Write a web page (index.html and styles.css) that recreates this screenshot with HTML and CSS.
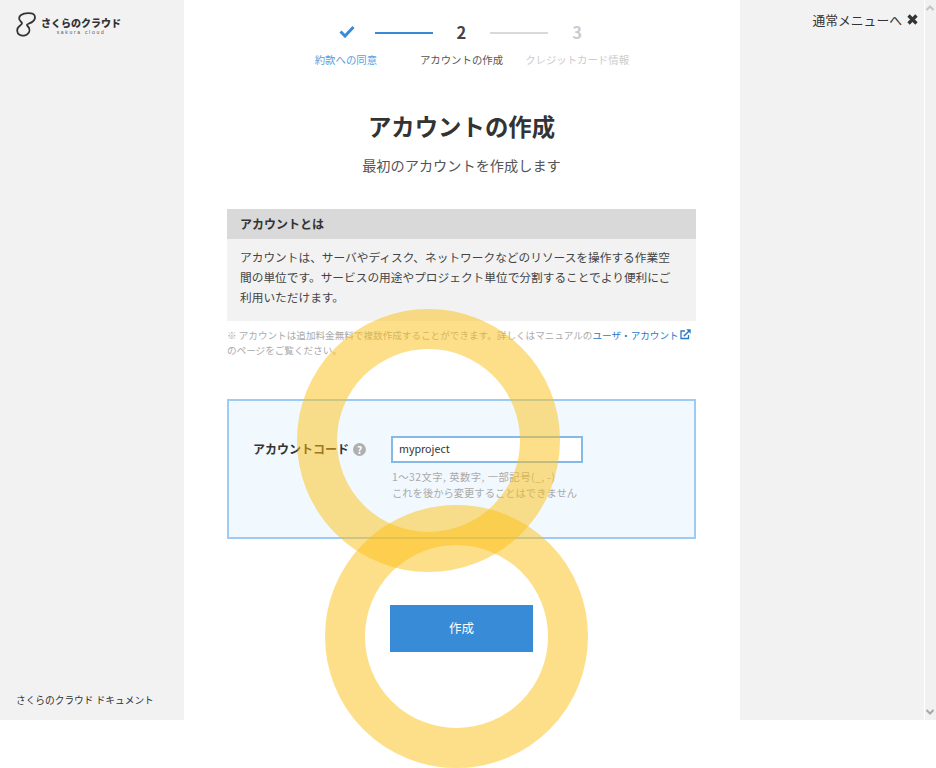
FILE: index.html
```html
<!DOCTYPE html>
<html lang="ja">
<head>
<meta charset="utf-8">
<title>アカウントの作成</title>
<link rel="stylesheet" href="styles.css">
</head>
<body>
<div class="app">
  <aside class="side-left">
    <div class="logo">
      <svg class="logo-mark" width="20" height="25" viewBox="0 0 20 25"><path d="M5 3C7 1.500 12 0.800 15.500 1.300 18.300 1.700 19.300 4 18.800 6.500 18.300 9.500 15.500 10.500 13 11.500 10.500 12.500 10.500 13 12 14.500 13.500 16 14 19 12.500 21 10.500 23.800 6 24.300 3.500 22.800 0.500 21 0.500 16.500 3 14.500 5.500 12.500 7 11.500 5 9.800 2.500 7.800 2.500 4.800 5 3z" fill="none" stroke="#333" stroke-width="1.800"/></svg>
      <div class="logo-text">
        <span class="logo-ja">さくらのクラウド</span>
        <span class="logo-en">sakura cloud</span>
      </div>
    </div>
    <div class="doc-link">さくらのクラウド ドキュメント</div>
  </aside>
  <main class="main">
    <div class="steps">
      <div class="step-icons">
        <span class="step-cell step-check"><svg width="16" height="13" viewBox="0 0 16 13"><path d="M1.500 6.500l4.500 4.500 8.500-9" fill="none" stroke="#3a8ad6" stroke-width="3"/></svg></span>
        <span class="step-cell"><span class="step-line step-line-done"></span></span>
        <span class="step-cell step-num">2</span>
        <span class="step-cell"><span class="step-line"></span></span>
        <span class="step-cell step-num step-num-off">3</span>
      </div>
      <div class="step-labels">
        <span class="step-label step-label-done">約款への同意</span>
        <span class="step-label">アカウントの作成</span>
        <span class="step-label step-label-off">クレジットカード情報</span>
      </div>
    </div>
    <h1 class="title">アカウントの作成</h1>
    <p class="subtitle">最初のアカウントを作成します</p>
    <section class="info">
      <h2 class="info-head">アカウントとは</h2>
      <p class="info-body">アカウントは、サーバやディスク、ネットワークなどのリソースを操作する作業空間の単位です。サービスの用途やプロジェクト単位で分割することでより便利にご利用いただけます。</p>
    </section>
    <p class="note">※ アカウントは追加料金無料で複数作成することができます。詳しくはマニュアルの<a class="note-link">ユーザ・アカウント<svg class="ext" width="11" height="11" viewBox="0 0 11 11"><path d="M8.500 6v3.500h-7.500v-7.500h4" fill="none" stroke="#2a78c4" stroke-width="1.300"/><path d="M3.800 7.200l5.200-5.200" stroke="#2a78c4" stroke-width="1.500"/><path d="M6.300 0.300h4.400v4.400z" fill="#2a78c4"/></svg></a><br>のページをご覧ください。</p>
    <form class="form-box">
      <div class="field-label">アカウントコード<span class="help">?</span></div>
      <div class="field-body">
        <input class="field-input" type="text" value="myproject">
        <div class="hint hint-rule">1〜32文字, 英数字, 一部記号(_, -)</div>
        <div class="hint">これを後から変更することはできません</div>
      </div>
    </form>
    <div class="actions"><button class="submit" type="button">作成</button></div>
  </main>
  <aside class="side-right">
    <span>通常メニューへ</span>
    <svg width="11" height="11" viewBox="0 0 10 10"><path d="M1.400 1.400l7.200 7.200M8.600 1.400l-7.200 7.200" stroke="#333" stroke-width="3"/></svg>
  </aside>
  <div class="scrollbar">
    <svg width="12" height="12" viewBox="0 0 12 12"><path d="M2.500 8l3.500-3.500 3.500 3.500" fill="none" stroke="#c4c4c4" stroke-width="2"/></svg>
    <svg width="12" height="12" viewBox="0 0 12 12"><path d="M2.500 4l3.500 3.500 3.500-3.500" fill="none" stroke="#a8a8a8" stroke-width="2"/></svg>
  </div>
</div>
<div class="ring ring-a"></div>
<div class="ring ring-b"></div>
</body>
</html>
```

FILE: styles.css
```css
* { box-sizing: border-box; }
html, body { margin: 0; padding: 0; }
body {
  height: 768px;
  overflow: hidden;
  background: #fff;
  color: #333;
  font-family: "Noto Sans CJK JP", "Noto Sans", sans-serif;
  position: relative;
}
.app { display: flex; height: 720px; }
.side-left {
  flex: none;
  width: 184px;
  background: #f2f2f2;
  display: flex;
  flex-direction: column;
  justify-content: space-between;
  padding: 12px 0 12px 16px;
}
.logo { display: flex; align-items: flex-start; gap: 5px; }
.logo-text { display: flex; flex-direction: column; padding-top: 6px; width: 80px; }
.logo-ja { font-family: "Liberation Sans", "Noto Sans CJK JP", sans-serif; font-size: 10px; line-height: 11px; font-weight: 900; color: #333; white-space: nowrap; }
.logo-en { font-family: "Liberation Sans", sans-serif; font-size: 5px; line-height: 6px; letter-spacing: 1.700px; color: #555; text-align: center; white-space: nowrap; }
.doc-link { font-size: 9.700px; line-height: 15px; color: #333; }
.main {
  flex: none;
  width: 556px;
  background: #fff;
  padding: 0 44px 0 43px;
}
.steps { padding-top: 21px; }
.step-icons { display: flex; justify-content: center; align-items: center; height: 22px; }
.step-cell { width: 57.800px; display: flex; justify-content: center; align-items: center; }
.step-check { margin-top: -2px; padding-left: 3px; }
.step-line { display: block; width: 100%; height: 2px; margin-top: 2px; background: #d9d9d9; }
.step-line-done { background: #3a8ad6; }
.step-num { font-size: 16.500px; font-weight: 700; color: #444; margin-top: -1px; }
.step-num-off { color: #ccc; }
.step-labels { display: flex; justify-content: center; margin-top: 9px; }
.step-label { width: 115.600px; text-align: center; font-size: 10.400px; line-height: 16px; color: #555; white-space: nowrap; }
.step-label-done { color: #5a9fe0; }
.step-label-off { color: #ccc; }
.title { margin: 40px 0 0; text-align: center; font-size: 23.400px; line-height: 36px; font-weight: 700; color: #333; }
.subtitle { margin: 11px 0 0; text-align: center; font-size: 14.200px; line-height: 20px; color: #555; }
.info { margin-top: 34px; background: #f2f2f2; }
.info-head { margin: 0; height: 30px; padding: 0 13px; background: #d9d9d9; font-size: 12px; line-height: 29px; font-weight: 700; color: #333; }
.info-body { margin: 0; padding: 8px 20px 14px 13px; font-size: 11.700px; line-height: 20px; color: #444; }
.note { margin: 7px 0 0; font-size: 9.600px; line-height: 15px; color: #aaa; white-space: nowrap; }
.note-link { color: #2a78c4; }
.ext { margin-left: 1px; vertical-align: -1px; }
.form-box {
  margin-top: 41px;
  height: 140px;
  border: 2px solid #9ccbf3;
  background: #f1f8fe;
  display: flex;
  padding: 35px 0 0 24px;
}
.field-label { width: 138px; padding-top: 3px; font-size: 12px; line-height: 20px; font-weight: 700; color: #333; display: flex; align-items: flex-start; white-space: nowrap; }
.help {
  width: 13px; height: 13px; margin: 4px 0 0 4px; border-radius: 50%;
  background: #b0b0b0; color: #fff; font-size: 10px; line-height: 13px; text-align: center; font-weight: 700;
}
.field-body { width: 192px; }
.field-input {
  display: block; width: 192px; height: 27px; padding: 0 6px 2px;
  border: 2px solid #85b9ea; background: #fff; outline: none; border-radius: 0;
  font-family: "Noto Sans CJK JP", "Noto Sans", sans-serif; font-size: 10.700px; color: #333;
}
.hint { margin-left: 1px; font-size: 10.300px; line-height: 16px; color: #aaa; white-space: nowrap; }
.hint-rule { margin-top: 6px; letter-spacing: 0.500px; }
.actions { display: flex; justify-content: flex-start; margin-top: 66px; padding-left: 163px; }
.submit {
  width: 143px; height: 47px; border: 0; padding: 0 0 2px; background: #388bd6; color: #fff;
  font-family: "Noto Sans CJK JP", "Noto Sans", sans-serif; font-size: 12.500px;
}
.side-right {
  flex: none;
  width: 184px;
  background: #f2f2f2;
  display: flex;
  justify-content: flex-end;
  align-items: center;
  height: 720px;
  gap: 5px;
  padding: 0 6px 681px 0;
  font-size: 12.800px;
  color: #333;
  white-space: nowrap;
}
.scrollbar {
  flex: none;
  width: 12px;
  background: #f1f1f1;
  display: flex;
  flex-direction: column;
  justify-content: space-between;
  padding: 2px 0;
  box-shadow: inset 1px 0 0 #fff;
}
.ring {
  position: absolute;
  width: 263px;
  height: 263px;
  border-radius: 50%;
  border: 40px solid rgba(253, 191, 20, 0.5);
  pointer-events: none;
}
.ring-a { left: 297px; top: 309px; }
.ring-b { left: 325px; top: 504.500px; }
```
